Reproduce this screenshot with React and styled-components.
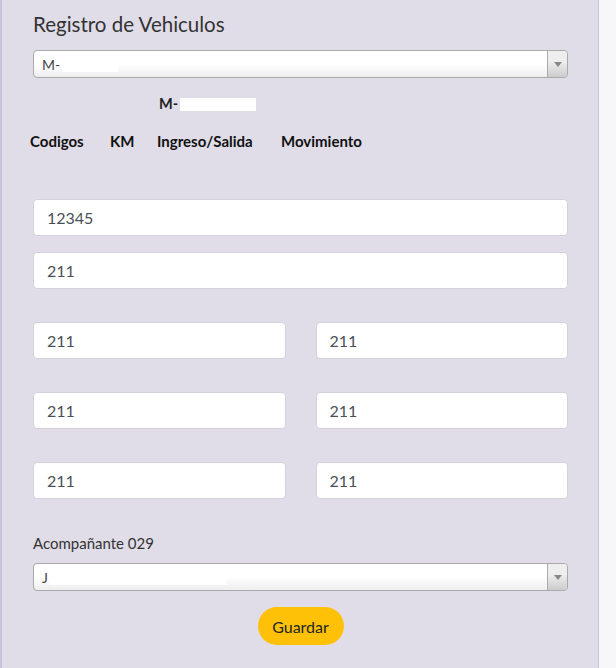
import React from "react";
import styled, { createGlobalStyle } from "styled-components";

const GlobalStyle = createGlobalStyle`
  body {
    margin: 0;
    background: #f7f7f9;
    font-family: Lato, "Open Sans", Arial, sans-serif;
  }
`;

const Page = styled.div`
  display: flex;
  min-height: 668px;
`;

const Panel = styled.div`
  box-sizing: border-box;
  width: 599px;
  min-height: 668px;
  background: #e0dde8;
  border-left: 2px solid #cac4d8;
  border-right: 1px solid #cac4d8;
  padding: 12px 30px 20px 31px;
  display: flex;
  flex-direction: column;
`;

const Title = styled.h2`
  margin: 0;
  font-size: 20.5px;
  line-height: 24px;
  font-weight: 400;
  color: #333;
`;

const Select = styled.div`
  box-sizing: border-box;
  height: 28px;
  margin-top: ${(p) => p.$mt || 0}px;
  border: 1px solid #aaa;
  border-radius: 4px;
  background: linear-gradient(to top, #eee 0%, #fff 50%);
  display: flex;
  align-items: center;
  font-size: 14px;
  color: #444;
`;

const SelectText = styled.span`
  flex: 1;
  padding-left: 8px;
  display: flex;
  align-items: center;
  white-space: nowrap;
`;

const Arrow = styled.span`
  width: 19px;
  align-self: stretch;
  border-left: 1px solid #aaa;
  border-radius: 0 4px 4px 0;
  background: linear-gradient(to top, #ccc 0%, #eee 60%);
  display: flex;
  align-items: center;
  justify-content: center;
  &::after {
    content: "";
    border-left: 4px solid transparent;
    border-right: 4px solid transparent;
    border-top: 5px solid #888;
  }
`;

const Blank = styled.span`
  display: inline-block;
  width: ${(p) => p.$w}px;
  height: ${(p) => p.$h || 14}px;
  background: #fff;
  margin-left: ${(p) => p.$ml || 0}px;
`;

const Plate = styled.div`
  margin-top: 16px;
  padding-left: 126px;
  font-size: 14.5px;
  line-height: 20px;
  font-weight: 700;
  color: #222;
  display: flex;
  align-items: center;
`;

const HeaderRow = styled.div`
  margin-top: 17px;
  margin-left: -3px;
  display: grid;
  grid-template-columns: 80px 47px 124px auto;
  font-size: 15px;
  line-height: 20px;
  font-weight: 700;
  color: #111;
`;

const Input = styled.input`
  box-sizing: border-box;
  width: 100%;
  height: 37px;
  margin-top: ${(p) => p.$mt || 0}px;
  border: 1px solid #d3d1db;
  border-radius: 4px;
  background: #fff;
  padding: 0 13px;
  font-family: inherit;
  font-size: 16px;
  color: #495057;
  outline: none;
`;

const Grid = styled.div`
  display: grid;
  grid-template-columns: 1fr 1fr;
  column-gap: 30px;
  row-gap: 33px;
  margin-top: 33px;
`;

const Label = styled.div`
  margin-top: 34px;
  font-size: 15px;
  line-height: 20px;
  color: #333;
`;

const SaveButton = styled.button`
  align-self: center;
  margin-top: 16px;
  width: 86px;
  height: 38px;
  border: none;
  border-radius: 19px;
  background: #ffc107;
  color: #212529;
  font-family: inherit;
  font-size: 16px;
  padding: 0;
`;

const Side = styled.div`
  flex: 1;
  background: #f7f7f9;
`;

export default function App() {
  const pairs = [
    ["211", "211"],
    ["211", "211"],
    ["211", "211"],
  ];

  return (
    <>
      <GlobalStyle />
      <Page>
        <Panel>
          <Title>Registro de Vehiculos</Title>
          <Select $mt={14}>
            <SelectText>
              M-<Blank $w={56} $h={15} $ml={2} />
            </SelectText>
            <Arrow />
          </Select>

          <Plate>
            M-<Blank $w={76} $h={13} $ml={2} />
          </Plate>

          <HeaderRow>
            <span>Codigos</span>
            <span>KM</span>
            <span>Ingreso/Salida</span>
            <span>Movimiento</span>
          </HeaderRow>

          <Input $mt={48} defaultValue="12345" />
          <Input $mt={16} defaultValue="211" />

          <Grid>
            {pairs.map((p, i) => (
              <React.Fragment key={i}>
                <Input defaultValue={p[0]} />
                <Input defaultValue={p[1]} />
              </React.Fragment>
            ))}
          </Grid>

          <Label>Acompañante 029</Label>
          <Select $mt={10}>
            <SelectText>
              J<Blank $w={178} $h={15} $ml={1} />
            </SelectText>
            <Arrow />
          </Select>

          <SaveButton type="button">Guardar</SaveButton>
        </Panel>
        <Side />
      </Page>
    </>
  );
}
